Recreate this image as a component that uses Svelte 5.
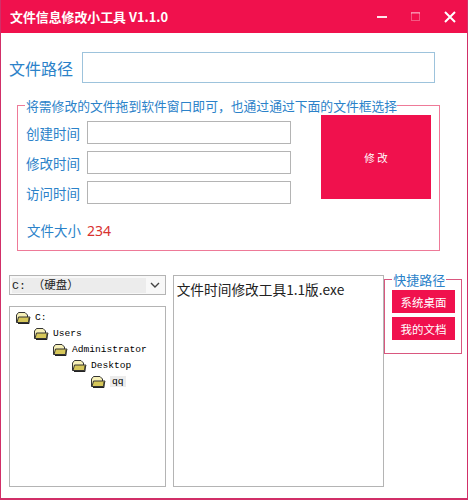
<script>
	const timeFields = ['创建时间', '修改时间', '访问时间'];
	const folders = ['C:', 'Users', 'Administrator', 'Desktop', 'qq'];
</script>

<div class="window">
	<header class="titlebar">
		<span class="title">文件信息修改小工具 V1.1.0</span>
		<div class="controls">
			<svg width="12" height="12" viewBox="0 0 12 12"><rect x="1" y="5" width="10" height="2" fill="#fff" opacity="0.9" /></svg>
			<svg width="12" height="12" viewBox="0 0 12 12"><rect x="1.5" y="1.5" width="8" height="8" fill="none" stroke="#fff" stroke-opacity="0.3" /><rect x="1" y="1" width="9" height="2" fill="#fff" fill-opacity="0.3" /></svg>
			<svg width="12" height="12" viewBox="0 0 12 12"><path d="M1 1 L11 11 M11 1 L1 11" stroke="#fff" stroke-width="2" fill="none" /></svg>
		</div>
	</header>

	<main class="content">
		<div class="path-row">
			<span class="path-label">文件路径</span>
			<div class="path-input"></div>
		</div>

		<fieldset class="group">
			<legend>将需修改的文件拖到软件窗口即可，也通过通过下面的文件框选择</legend>
			<div class="group-body">
				<div class="fields">
					{#each timeFields as label}
						<div class="field">
							<span class="field-label">{label}</span>
							<div class="field-input"></div>
						</div>
					{/each}
					<div class="size-row">
						<span class="size-label">文件大小</span>
						<span class="size-value">234</span>
					</div>
				</div>
				<button class="apply">修 改</button>
			</div>
		</fieldset>

		<div class="browser">
			<div class="left">
				<div class="drive">
					<span class="drive-name">C: （硬盘）</span>
					<svg width="10" height="6" viewBox="0 0 10 6"><path d="M1 1 L5 5 L9 1" fill="none" stroke="#444" stroke-width="1.4" /></svg>
				</div>
				<div class="tree">
					{#each folders as name, depth}
						<div class="node" style:padding-left="{depth * 19 - 1}px">
							<svg width="16" height="13" viewBox="0 0 16 13">
								<path d="M1.5 4 L3.5 1.5 H10 L12.5 4 V11.5 H1.5 Z" fill="#f6f0b8" stroke="#333" />
								<path d="M2 11.5 L3.5 6 H15 L13.5 11.5 Z" fill="#d6c75a" stroke="#333" />
								<path d="M14 7 V12.5 H3" fill="none" stroke="#222" />
							</svg>
							<span class:selected={depth === folders.length - 1}>{name}</span>
						</div>
					{/each}
				</div>
			</div>

			<div class="files">文件时间修改工具1.1版.exe</div>

			<fieldset class="quick">
				<legend>快捷路径</legend>
				<button>系统桌面</button>
				<button>我的文档</button>
			</fieldset>
		</div>
	</main>
</div>

<style>
	:global(body) {
		margin: 0;
		background: #fff;
	}

	.window {
		box-sizing: border-box;
		width: 468px;
		height: 500px;
		display: flex;
		flex-direction: column;
		border: solid #d12f68;
		border-width: 0 1px 2px;
		font-family: 'Noto Sans CJK SC', 'Liberation Sans', sans-serif;
		overflow: hidden;
	}

	.titlebar {
		height: 33px;
		flex: none;
		margin: 0 -1px;
		display: flex;
		align-items: center;
		justify-content: space-between;
		padding: 0 11px 0 10px;
		background: #f0114d;
		color: #fff;
	}

	.title {
		font-size: 12.9px;
		font-weight: 700;
	}

	.controls {
		display: flex;
		gap: 22px;
		padding-right: 1px;
	}

	.controls svg {
		display: block;
	}

	.content {
		flex: 1;
		padding: 19px 5px 10px 8px;
		display: flex;
		flex-direction: column;
	}

	.path-row {
		display: flex;
		align-items: center;
		gap: 9px;
		width: 426px;
	}

	.path-label {
		font-size: 16px;
		line-height: 20px;
		color: #2b82c9;
		white-space: nowrap;
	}

	.path-input {
		box-sizing: border-box;
		width: 353px;
		height: 31px;
		border: 1px solid #9dc3dc;
	}

	.group {
		box-sizing: border-box;
		width: 423px;
		height: 154px;
		margin: 14px 0 0 8px;
		padding: 0 8px 0 8px;
		border: 1px solid #ee7a98;
		min-width: 0;
	}

	.group legend {
		padding: 0 0 0 1px;
		margin-left: -1px;
		font-size: 12.8px;
		line-height: 17px;
		color: #2b82c9;
		white-space: nowrap;
	}

	.group-body {
		display: flex;
		justify-content: space-between;
		padding-top: 1px;
	}

	.fields {
		display: flex;
		flex-direction: column;
		padding-top: 6px;
	}

	.field {
		display: flex;
		align-items: center;
		gap: 6px;
		height: 23px;
		margin-bottom: 7px;
	}

	.field-label,
	.size-label {
		font-size: 13.5px;
		color: #2b82c9;
		white-space: nowrap;
		width: 55px;
	}

	.field-input {
		box-sizing: border-box;
		width: 204px;
		height: 23px;
		border: 1px solid #b4b4b4;
	}

	.size-row {
		display: flex;
		align-items: center;
		gap: 5px;
		margin-top: 9px;
		padding-left: 1px;
	}

	.size-value {
		font-size: 14px;
		color: #d8322f;
		font-family: 'Noto Sans', sans-serif;
	}

	.apply {
		width: 110px;
		height: 84px;
		border: none;
		background: #f0114d;
		color: #fff;
		font: inherit;
		font-size: 10.5px;
		padding: 0;
		margin-top: 0;
	}

	.browser {
		display: flex;
		margin-top: 24px;
		align-items: flex-start;
	}

	.left {
		width: 157px;
		margin-right: 7px;
	}

	.drive {
		box-sizing: border-box;
		height: 20px;
		display: flex;
		align-items: center;
		justify-content: space-between;
		padding: 0 5px 0 2px;
		border: 1px solid #b4b4b4;
		background: #f8f8f8;
	}

	.drive-name {
		flex: 1;
		margin-right: 4px;
		background: #ececec;
		font-family: 'Liberation Mono', 'Noto Sans CJK SC', monospace;
		font-size: 11.5px;
		line-height: 15px;
		color: #222;
	}

	.tree {
		box-sizing: border-box;
		height: 181px;
		margin-top: 11px;
		padding: 2px 0 0 5px;
		border: 1px solid #b4b4b4;
	}

	.node {
		display: flex;
		align-items: center;
		gap: 4px;
		height: 16px;
		font-family: 'Liberation Mono', monospace;
		font-size: 9.6px;
		color: #000;
	}

	.node:first-child {
		padding-left: 0 !important;
	}

	.node svg {
		flex: none;
	}

	.selected {
		background: #ececec;
		padding: 0 2px;
	}

	.files {
		box-sizing: border-box;
		width: 212px;
		height: 212px;
		padding: 2px 3px;
		border: 1px solid #b4b4b4;
		font-family: 'Noto Sans CJK SC', 'Liberation Sans', sans-serif;
		font-size: 13.7px;
		line-height: 22px;
		color: #222;
		white-space: nowrap;
	}

	.quick {
		box-sizing: border-box;
		width: 78px;
		height: 83px;
		margin: -4px 0 0 0;
		padding: 2px 6px 0 7px;
		border: 1px solid #d9577f;
		min-width: 0;
		display: flex;
		flex-direction: column;
		gap: 4px;
	}

	.quick legend {
		padding: 0 1px;
		margin-left: 0;
		font-size: 13px;
		line-height: 17px;
		color: #2b82c9;
		white-space: nowrap;
	}

	.quick button {
		flex: none;
		height: 23px;
		border: none;
		padding: 0;
		background: #f0114d;
		color: #fff;
		font: inherit;
		font-size: 11.5px;
	}
</style>
